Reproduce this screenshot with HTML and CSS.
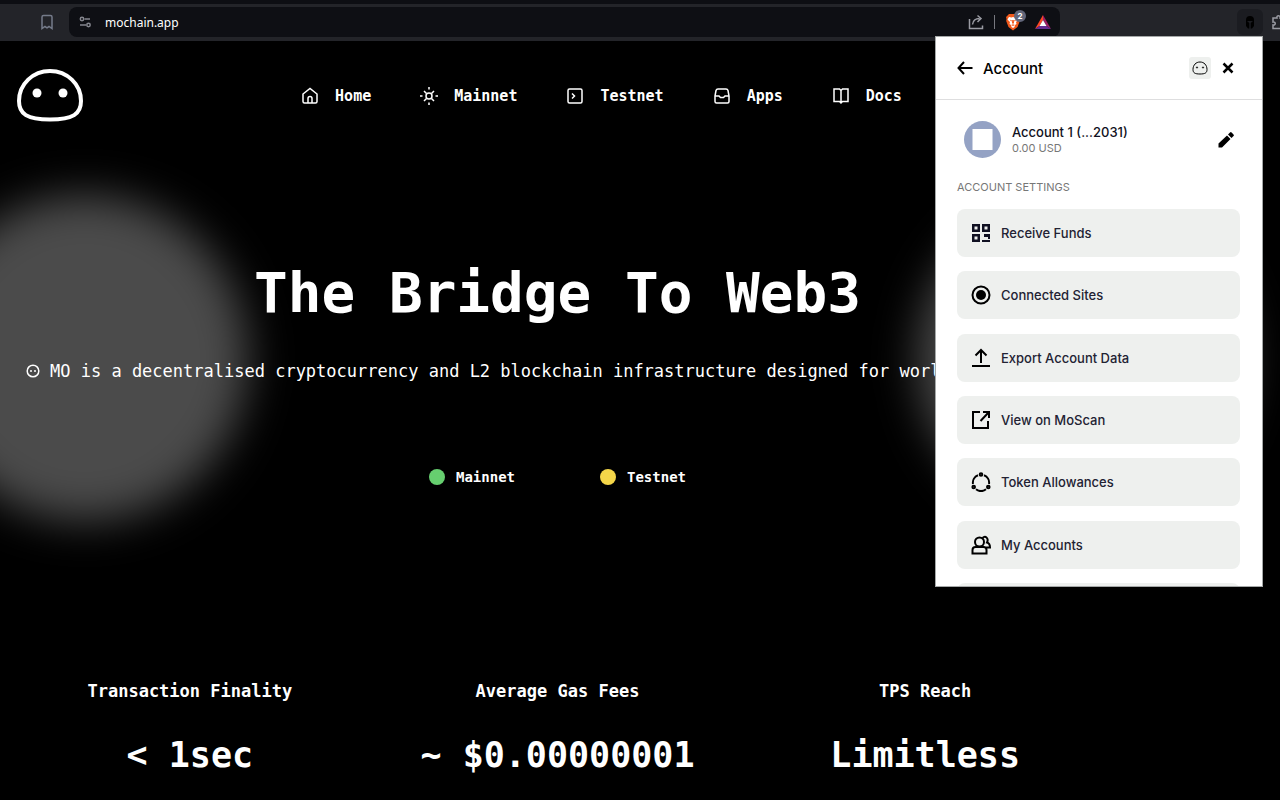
FILE: index.html
```html
<!DOCTYPE html>
<html lang="en">
<head>
  <meta charset="UTF-8" />
  <meta name="viewport" content="width=device-width, initial-scale=1.0" />
  <title>MO Chain</title>
  <link rel="stylesheet" href="styles.css">
</head>
<body>
  <div class="toolbar">
    <button class="tool-btn bookmark" aria-label="Bookmark">
      <svg width="14" height="16" viewBox="0 0 14 16"><path d="M2 3a1.500 1.500 0 0 1 1.500-1.500h7A1.500 1.500 0 0 1 12 3v11.500l-3-2-2 1.300-2-1.300-3 2z" /></svg>
    </button>
    <div class="address-bar">
      <svg class="site-info" width="13" height="12" viewBox="0 0 13 12"><circle cx="3" cy="3" r="1.700" /><path d="M5.500 3H11M1 9h6" /><circle cx="9.500" cy="9" r="1.700" /></svg>
      <input class="address" type="text" value="mochain.app" aria-label="Address">
      <button class="tool-btn" aria-label="Share">
        <svg width="16" height="16" viewBox="0 0 16 16"><path d="M1.500 5v9.500h13V11.500M4.500 10.500c.5-4 3-6 7-6M9.500 1.500l3.500 3-3.500 3.500" /></svg>
      </button>
      <span class="divider"></span>
      <button class="tool-btn shields" aria-label="Shields">
        <svg width="16" height="18" viewBox="0 0 16 18"><path fill="#f25a1c" stroke="none" d="M4 1h8l3 3-.5 2 .3 2-2.300 6L8 17.500 3.500 14 1.200 8l.3-2L1 4z" /><path fill="#fff" stroke="none" d="M4 4l2.500.5L8 4l1.500.5L12 4l1.500 2.500L11 9l.5 2-1.500 1-.5 2L8 15l-1.500-1L6 12l-1.500-1L5 9 2.500 6.500z" /><path fill="#f25a1c" stroke="none" d="M4.500 6.500l2.500 1-.7 1zM11.500 6.500L9 7.500l.7 1zM7.200 7h1.600L9 10l-1 1-1-1zM6 12l2-.8 2 .8-2 1z" /></svg>
        <span class="count">2</span>
      </button>
      <button class="tool-btn" aria-label="Rewards">
        <svg width="16" height="14" viewBox="0 0 16 14"><path fill="#ff4724" stroke="none" d="M8 0v5L4.500 11 0 14z" /><path fill="#9e1f63" stroke="none" d="M8 0l8 14-4.500-3L8 5z" /><path fill="#662d91" stroke="none" d="M0 14l4.500-3h7L16 14z" /><path fill="#fff" stroke="none" d="M8 5l3.500 6h-7z" /></svg>
      </button>
    </div>
    <div class="extensions">
      <button class="tool-btn wallet-ext" aria-label="Wallet">
        <svg width="10" height="14" viewBox="0 0 10 14"><path fill="#000" stroke="none" d="M1 5a4 4 0 0 1 8 0v6l-2 2.500H5.700V8L8 6H2l2.300 2v5.500H3L1 11z" /></svg>
      </button>
      <button class="tool-btn" aria-label="Extensions">
        <svg width="18" height="16" viewBox="0 0 18 16"><path d="M2 4h4c-.8-3 3.800-3 3 0h4v4c3-.8 3 3.800 0 3v3.500H2V11c3 .6 3-3.600 0-3z" /></svg>
      </button>
    </div>
  </div>

  <div class="page">
    <header class="site-header">
      <a href="#" class="logo" aria-label="MO">
        <svg width="68" height="54" viewBox="0 0 68 54"><path d="M34 2C51 2 65 15 65 32c0 13-8 18.500-31 18.500S3 45 3 32C3 15 17 2 34 2z" /><circle cx="21" cy="24" r="4.500" /><circle cx="47" cy="24" r="4.500" /></svg>
      </a>
      <nav class="nav">
        <a href="#"><svg viewBox="0 0 18 18"><path d="M2 7l7-5.500L16 7v7.500a1.500 1.500 0 0 1-1.500 1.500h-11A1.500 1.500 0 0 1 2 14.500zM7 16v-4.500a2 2 0 0 1 4 0V16" /></svg>Home</a>
        <a href="#"><svg viewBox="0 0 18 18"><circle cx="9" cy="9" r="3" /><path d="M9 0v2.500M9 15.500V18M0 9h2.500M15.500 9H18M4 4l2.500 2.500M11.500 11.500L14 14M4 14l2.500-2.500M11.500 6.500L14 4" /></svg>Mainnet</a>
        <a href="#"><svg viewBox="0 0 18 18"><rect x="2" y="2" width="14" height="14" rx="1.500" /><path d="M6 6.500L8.500 9 6 11.500" /></svg>Testnet</a>
        <a href="#"><svg viewBox="0 0 18 18"><path d="M2 9l1-5.500C3.300 2.500 4 2 5 2h8c1 0 1.700.5 2 1.500L16 9v5.500a1.500 1.500 0 0 1-1.500 1.500h-11A1.500 1.500 0 0 1 2 14.500zM2 9h4l1.500 1.500h3L12 9h4" /></svg>Apps</a>
        <a href="#"><svg viewBox="0 0 18 18"><path d="M9 3.500L7.500 2H2v12.500h5.500L9 16l1.500-1.500H16V2h-5.500zM9 3.500V16" /></svg>Docs</a>
      </nav>
    </header>

    <main>
      <section class="hero">
        <div class="glow glow-left"></div>
        <div class="glow glow-right"></div>
        <h1>The Bridge To Web3</h1>
        <p class="tagline">
          <svg width="14" height="14" viewBox="0 0 14 14"><circle cx="7" cy="7" r="5.800" /><path d="M4 7h2M8 7h2" /></svg>
          <span>MO is a decentralised cryptocurrency and L2 blockchain infrastructure designed for worldwide use</span>
        </p>
        <ul class="networks">
          <li><span class="dot green"></span>Mainnet</li>
          <li><span class="dot yellow"></span>Testnet</li>
        </ul>
      </section>

      <section class="stats">
        <div class="stat">
          <h2>Transaction Finality</h2>
          <p>&lt; 1sec</p>
        </div>
        <div class="stat">
          <h2>Average Gas Fees</h2>
          <p>~ $0.00000001</p>
        </div>
        <div class="stat">
          <h2>TPS Reach</h2>
          <p>Limitless</p>
        </div>
      </section>
    </main>
  </div>

  <aside class="wallet">
    <div class="wallet-header">
      <button aria-label="Back"><svg width="16" height="14" viewBox="0 0 16 14"><path d="M15.500 7H1.500M7 1L1.500 7 7 13" /></svg></button>
      <h2>Account</h2>
      <button class="network-btn" aria-label="Network"><svg width="16" height="14" viewBox="0 0 16 14"><path d="M8 1c4 0 7 3 7 7.500 0 3.500-2 4.500-7 4.500s-7-1-7-4.500C1 4 4 1 8 1z" /><circle cx="5" cy="6.500" r=".6" /><circle cx="11" cy="6.500" r=".6" /></svg></button>
      <button class="close" aria-label="Close"><svg width="12" height="12" viewBox="0 0 12 12"><path d="M1.500 1.500l9 9M10.500 1.500l-9 9" /></svg></button>
    </div>
    <div class="account">
      <svg width="37" height="37" viewBox="0 0 37 37"><circle cx="18.500" cy="18.500" r="18.500" fill="#94a2c4" stroke="none" /><rect x="8.500" y="8" width="20" height="21" fill="#fff" stroke="none" /></svg>
      <div class="account-info">
        <div class="account-name">Account 1 (...2031)</div>
        <div class="balance">0.00 USD</div>
      </div>
      <button aria-label="Edit account"><svg width="16" height="16" viewBox="0 0 16 16"><path fill="#000" stroke="none" d="M.5 11.500L9 3.500 12.500 7 4 15.500H.5zM10 2.500L12 .5q.8-.8 1.600 0l1.900 1.900q.8.8 0 1.600L13.500 6z" /></svg></button>
    </div>
    <h3>ACCOUNT SETTINGS</h3>
    <div class="settings">
      <button><svg viewBox="0 0 20 20"><path fill="#111122" stroke="none" fill-rule="evenodd" d="M1 1h8v8H1zM3.500 3.500v3h3v-3zM11 1h8v8h-8zM13.500 3.500v3h3v-3zM1 11h8v8H1zM3.500 13.500v3h3v-3zM13 11h6v5h-2v-2h-4zM11 17h8v2h-8z" /></svg>Receive Funds</button>
      <button><svg viewBox="0 0 20 20"><circle cx="10" cy="10" r="8.500" /><circle cx="10" cy="10" r="5" fill="#000" stroke="none" /></svg>Connected Sites</button>
      <button><svg viewBox="0 0 20 20"><path d="M10 15V2.500M4.500 7.500L10 2l5.500 5.500M1 18h18" /></svg>Export Account Data</button>
      <button><svg viewBox="0 0 20 20"><path d="M9 2H2v16h15v-7M12 2h6v6M18 2l-8.500 9" /></svg>View on MoScan</button>
      <button><svg viewBox="0 0 20 20"><path d="M7 3.200A8 8 0 0 0 2 12M13 3.200A8 8 0 0 1 18 12M5 17.300A8.500 8.500 0 0 0 15 17.300" /><circle cx="10" cy="2.500" r="1.300" /><circle cx="2.700" cy="15" r="1.300" /><circle cx="17.300" cy="15" r="1.300" /></svg>Token Allowances</button>
      <button><svg viewBox="0 0 20 20"><circle cx="8.500" cy="7" r="4.500" /><path d="M1.500 18.500v-3.500c0-2 1-3 3-3h8c2 0 3 1 3 3v3.500zM11.500 3c3-3 6.500.5 4.500 4.500 2 .5 3 2 3 5h-4" /></svg>My Accounts</button>
      <button aria-label="More settings"></button>
    </div>
  </aside>
</body>
</html>
```
FILE: styles.css
```css
* {
  box-sizing: border-box;
}
body {
  margin: 0;
  background: #000;
  color: #fff;
  font-family: "DejaVu Sans Mono", monospace;
  height: 100vh;
  overflow: hidden;
}
h1, h2, h3, p, ul {
  margin: 0;
  padding: 0;
}
button {
  border: none;
  background: none;
  padding: 0;
  font: inherit;
  color: inherit;
  cursor: pointer;
}
svg {
  display: block;
  flex: none;
  fill: none;
  stroke: currentColor;
}

/* browser toolbar */
.toolbar {
  display: flex;
  align-items: center;
  height: 41px;
  padding: 0 0 1px 40px;
  background: #232429;
  border-top: 4px solid #0d0e13;
  overflow: hidden;
}
.tool-btn {
  position: relative;
  color: #9a9ba3;
  stroke-width: 1.5;
}
.bookmark {
  margin-right: 15px;
  color: #757b8a;
}
.address-bar {
  display: flex;
  align-items: center;
  width: 991px;
  height: 30px;
  padding: 0 9px 0 10px;
  border-radius: 8px;
  background: #0e0f14;
}
.site-info {
  color: #85868e;
  stroke-width: 1.5;
}
.address {
  flex: 1;
  min-width: 0;
  margin-left: 13px;
  padding: 0;
  border: none;
  outline: none;
  background: none;
  color: #fff;
  font: 12px "Noto Sans", sans-serif;
}
.divider {
  width: 1px;
  height: 14px;
  margin: 0 10px;
  background: #77787f;
}
.shields {
  margin-right: 14px;
}
.count {
  position: absolute;
  top: -3px;
  right: -5px;
  width: 12px;
  height: 12px;
  border-radius: 50%;
  background: #62667a;
  color: #fff;
  font: bold 8px/12px Inter, sans-serif;
  text-align: center;
}
.extensions {
  display: flex;
  align-items: center;
  gap: 8px;
  margin-left: auto;
  margin-right: -9px;
}
.wallet-ext {
  display: grid;
  place-items: center;
  width: 26px;
  height: 26px;
  border-radius: 6px;
  background: #1b1c21;
}

/* site */
.page {
  margin-right: 165px;
}
.site-header {
  display: flex;
  align-items: center;
  height: 110px;
  padding-left: 16px;
}
.logo {
  margin-right: 4px;
  color: #fff;
}
.logo svg {
  stroke-width: 4;
}
.logo circle {
  fill: #fff;
  stroke: none;
}
.nav {
  display: flex;
  gap: 49px;
  margin: 0 auto;
}
.nav a {
  display: flex;
  align-items: center;
  gap: 16px;
  color: #fff;
  font-size: 15px;
  font-weight: bold;
  text-decoration: none;
}
.nav svg {
  width: 18px;
  height: 18px;
  stroke-width: 1.5;
}
.hero {
  position: relative;
  padding-top: 102px;
  text-align: center;
}
.glow {
  position: absolute;
  z-index: -1;
  top: 44px;
  width: 326px;
  height: 326px;
  border-radius: 50%;
  background: #4b4b4b;
  filter: blur(22px);
}
.glow-left {
  left: -78px;
}
.glow-right {
  right: -129px;
}
.hero h1 {
  font-size: 56px;
  line-height: 80px;
}
.tagline {
  display: flex;
  align-items: center;
  gap: 10px;
  margin-top: 26px;
  padding-left: 26px;
  font-size: 17px;
  line-height: 24px;
  white-space: nowrap;
}
.tagline svg {
  stroke-width: 1.5;
}
.networks {
  display: flex;
  justify-content: center;
  gap: 85px;
  margin-top: 84px;
  list-style: none;
  font-size: 14px;
  font-weight: bold;
  line-height: 20px;
}
.networks li {
  display: flex;
  align-items: center;
  gap: 11px;
}
.dot {
  width: 16px;
  height: 16px;
  border-radius: 50%;
}
.green {
  background: #66cf6f;
}
.yellow {
  background: #f4d649;
}
.stats {
  display: grid;
  grid-template-columns: repeat(3, 1fr);
  margin-top: 192px;
  padding: 0 6px;
  text-align: center;
}
.stat h2 {
  font-size: 17px;
  line-height: 24px;
}
.stat p {
  margin-top: 28px;
  font-size: 35px;
  font-weight: bold;
  line-height: 48px;
}

/* wallet popup */
.wallet {
  position: absolute;
  top: 36px;
  right: 17px;
  width: 328px;
  height: 551px;
  border: 1px solid #a5a8a8;
  background: #fff;
  color: #000;
  font-family: Inter, sans-serif;
  overflow: hidden;
}
.wallet-header {
  display: flex;
  align-items: center;
  height: 63px;
  padding: 0 28px 0 21px;
  border-bottom: 1px solid #dededf;
  stroke-width: 2;
}
.wallet-header h2 {
  flex: 1;
  margin-left: 10px;
  font-size: 15px;
  font-weight: 500;
}
.network-btn {
  display: grid;
  place-items: center;
  width: 22px;
  height: 22px;
  margin-right: 11px;
  border-radius: 3px;
  background: #eef0ee;
  stroke-width: 1;
}
.close {
  stroke-width: 2.5;
}
.account {
  display: flex;
  align-items: center;
  padding: 21px 28px 0 28px;
}
.account-info {
  flex: 1;
  margin-left: 11px;
  line-height: 16px;
}
.account-name {
  color: #111122;
  font-size: 13px;
  font-weight: 500;
}
.balance {
  color: #777;
  font-size: 11px;
}
.wallet h3 {
  margin: 21px 21px 14px;
  color: #777;
  font-size: 11px;
  font-weight: 400;
  line-height: 16px;
}
.settings {
  display: flex;
  flex-direction: column;
  justify-content: space-between;
  height: 422px;
  margin: 0 22px 0 21px;
}
.settings button {
  display: flex;
  align-items: center;
  gap: 10px;
  height: 48px;
  flex: none;
  padding-left: 14px;
  border-radius: 8px;
  background: #eef0ee;
  color: #222233;
  font-size: 13px;
  font-weight: 500;
}
.settings svg {
  width: 20px;
  height: 20px;
  stroke: #000;
  stroke-width: 2;
}
```
